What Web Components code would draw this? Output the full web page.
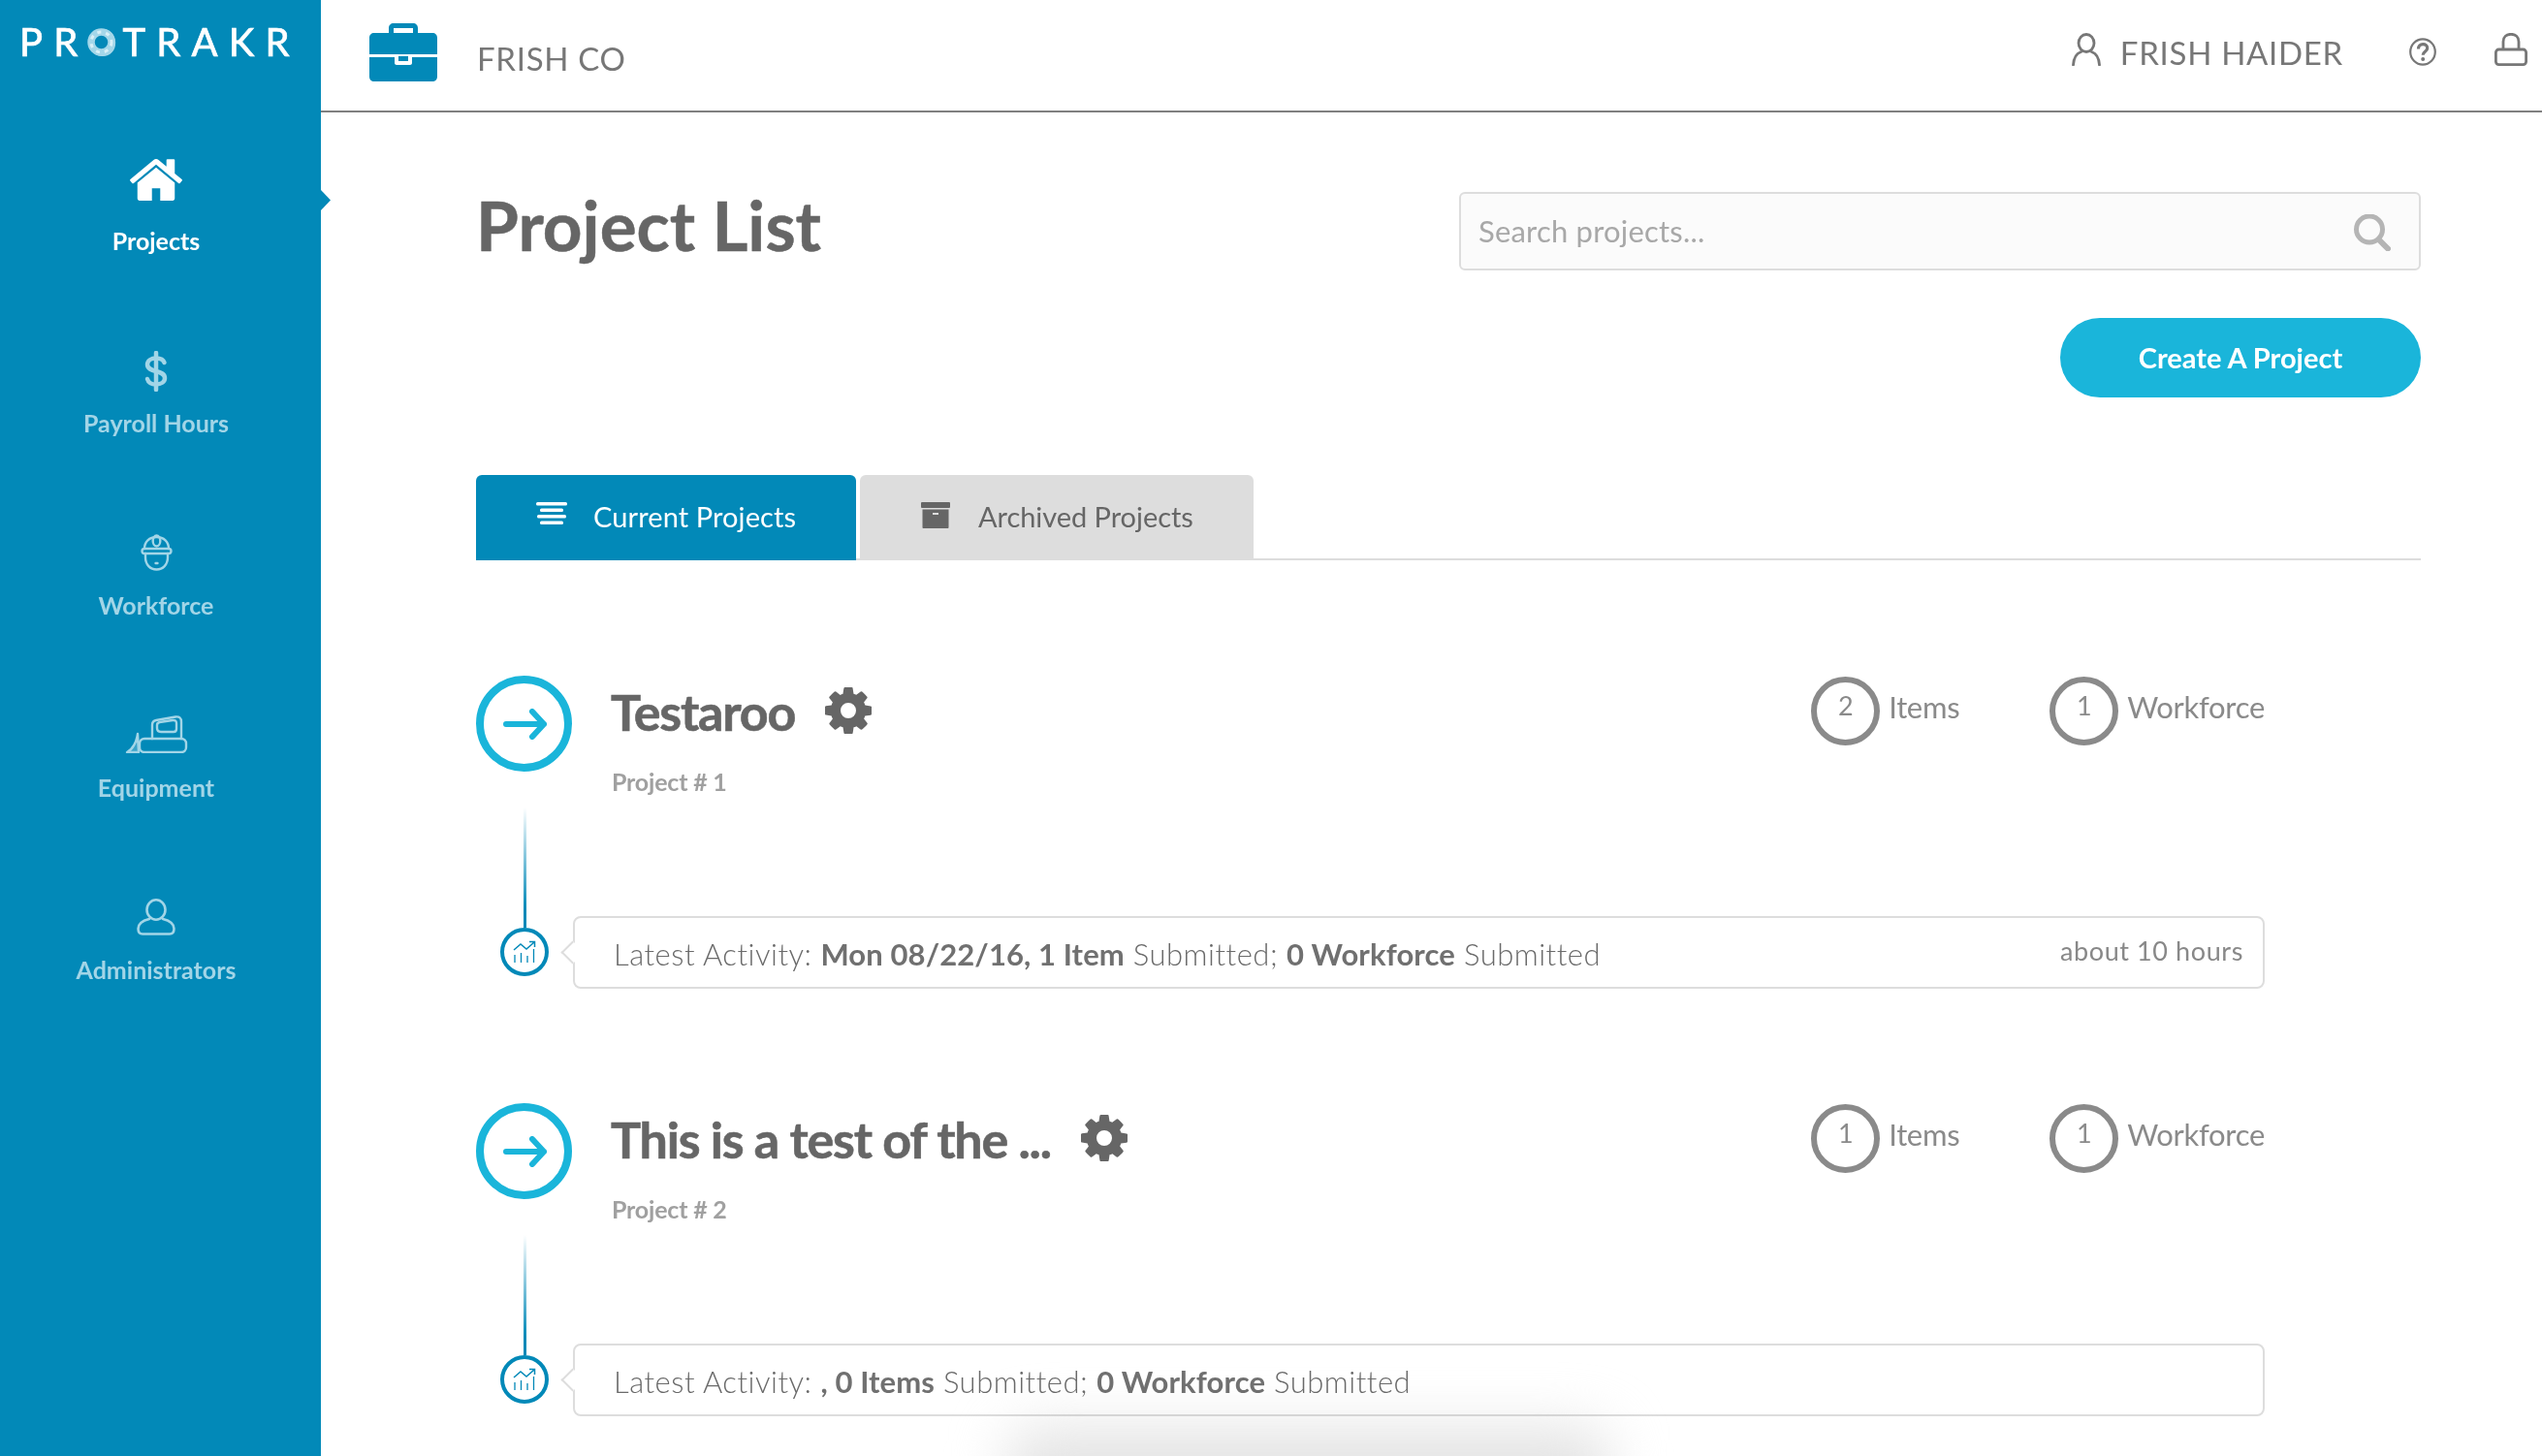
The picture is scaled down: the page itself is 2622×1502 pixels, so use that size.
<!DOCTYPE html>
<html>
<head>
<meta charset="utf-8">
<title>Project List</title>
<style>
  html, body { margin: 0; background: #fff; }
  body { font-family: Lato, "Open Sans", sans-serif; }
</style>
</head>
<body>
<app-shell>
  <side-bar slot="side">
    <nav-item icon="home" active>Projects</nav-item>
    <nav-item icon="dollar">Payroll Hours</nav-item>
    <nav-item icon="helmet">Workforce</nav-item>
    <nav-item icon="dozer">Equipment</nav-item>
    <nav-item icon="admin">Administrators</nav-item>
  </side-bar>
  <top-bar slot="top" company="FRISH CO" user="FRISH HAIDER"></top-bar>
  <page-head heading="Project List" placeholder="Search projects..." action="Create A Project"></page-head>
  <project-tabs></project-tabs>
  <project-row name="Testaroo" number="1" items="2" workforce="1" ago="about 10 hours">
    Latest Activity: <b>Mon 08/22/16, 1 Item</b> Submitted; <b>0 Workforce</b> Submitted
  </project-row>
  <project-row name="This is a test of the ..." number="2" items="1" workforce="1">
    Latest Activity: <b>, 0 Items</b> Submitted; <b>0 Workforce</b> Submitted
  </project-row>
</app-shell>

<script>
const ICONS = {
  home: { svg: `<svg width="54" height="43" viewBox="97 250 1598 1287" fill="currentColor"><path d="M1472 992v480q0 26-19 45t-45 19h-384v-384h-256v384h-384q-26 0-45-19t-19-45v-480q0-1 .5-3t.5-3l575-474 575 474q1 2 1 6zm223-69l-62 74q-8 9-21 11h-3q-13 0-21-7l-692-577-692 577q-12 8-24 7-13-2-21-11l-62-74q-8-10-7-23.500t11-21.500l719-599q32-26 76-26t76 26l244 204v-195q0-14 9-23t23-9h192q14 0 23 9t9 23v408l219 182q10 8 11 21.500t-7 23.500z"/></svg>` },
  dollar: { svg: `<svg width="24" height="42" viewBox="0 0 24 42" fill="none" stroke="currentColor" stroke-width="4.500" stroke-linecap="round"><path d="M12 2v38"/><path d="M20.500 12c-1-3-4.500-4.500-8.500-4.500-5 0-9 2.500-9 6.500 0 9 18 5 18 14 0 4-4 6.500-9 6.500-4.500 0-8-2-9-5.500"/></svg>` },
  helmet: { svg: `<svg width="33" height="38" viewBox="0 0 33 38" fill="none" stroke="currentColor" stroke-width="2.400" stroke-linecap="round" stroke-linejoin="round"><path d="M4 15C4 8 9 3 16.500 3S29 8 29 15"/><rect x="1.500" y="15" width="30" height="5" rx="2.500"/><ellipse cx="16.500" cy="7" rx="3.800" ry="5.500"/><path d="M5 20v4c0 7.500 5 12.500 11.500 12.500S28 31.500 28 24v-4"/><path d="M15.500 30h2"/></svg>` },
  dozer: { svg: `<svg width="65" height="39" viewBox="0 0 65 39" fill="none" stroke="currentColor" stroke-width="2.400" stroke-linecap="round" stroke-linejoin="round"><rect x="15" y="24" width="48" height="14" rx="5"/><path d="M28 24V10c0-3 1-4.500 4-5l20-3.500c4-.5 6 1 6 5V24"/><path d="M33 10c0-1.500 1-2.500 2.500-3L49 5c2.500-.300 4 .7 4 3v6c0 2-1 3-3 3H37c-2.500 0-4-1.500-4-4z"/><path d="M13 19c-1 8-5 16-11 19h12z" fill="currentColor" fill-opacity=".35"/></svg>` },
  admin: { svg: `<svg width="40" height="38" viewBox="0 0 40 38" fill="none" stroke="currentColor" stroke-width="2.600" stroke-linecap="round" stroke-linejoin="round"><ellipse cx="20" cy="11.500" rx="9.500" ry="10.200"/><path d="M13 21c-6 1.500-11.500 4-11.500 10 0 4 1.500 5.500 4.500 5.500h28c3 0 4.500-1.500 4.500-5.500 0-6-5.500-8.500-11.500-10"/></svg>` },
  briefcase: `<svg width="70" height="60" viewBox="0 0 70 60"><path fill="#0289b8" d="M20 10V5c0-3 2-5 5-5h20c3 0 5 2 5 5v5h15c3 0 5 2 5 5v17H0V15c0-3 2-5 5-5zm5 0h20V5H25zM0 35h26v6c0 1 1 2 2 2h14c1 0 2-1 2-2v-6h26v20c0 3-2 5-5 5H5c-3 0-5-2-5-5z"/><rect x="30" y="34" width="10" height="5" fill="#0289b8"/></svg>`,
  user: `<svg width="30" height="34" viewBox="0 0 30 34" fill="none" stroke="#777" stroke-width="2.800" stroke-linecap="round"><ellipse cx="15" cy="10.500" rx="8" ry="9"/><path d="M1.500 33c.5-7 3.500-12 8-13.500M28.500 33c-.5-7-3.500-12-8-13.500"/></svg>`,
  help: `<svg class="help" width="28" height="29" viewBox="0 0 28 29" fill="none" stroke="#777" stroke-width="2.200"><ellipse cx="14" cy="14.500" rx="12.800" ry="13.200"/><path d="M9.500 11.500c0-3 2-4.800 4.700-4.800 2.600 0 4.500 1.600 4.500 4 0 3.600-4.500 3.500-4.500 7" stroke-width="3.200"/><circle cx="14.200" cy="22" r="2" fill="#777" stroke="none"/></svg>`,
  lock: `<svg class="lock" width="34" height="34" viewBox="0 0 34 34" fill="none" stroke="#777" stroke-width="2.800"><path d="M9 17V9c0-5 3.500-7.700 8-7.700S25 4 25 9v8"/><rect x="1.400" y="17" width="31.200" height="15.600" rx="3"/></svg>`,
  search: `<svg width="38" height="38" viewBox="0 0 38 38" fill="none" stroke="#b5b5b5" stroke-width="5" stroke-linecap="round"><ellipse cx="16" cy="15.500" rx="13.500" ry="13.500"/><path d="M26 26.500l9 9" stroke-width="6"/></svg>`,
  list: `<svg width="32" height="23" viewBox="0 0 32 23" fill="#fff"><rect x="0" y="0" width="32" height="3.500" rx="1.500"/><rect x="4" y="6.500" width="24" height="3.500" rx="1.500"/><rect x="1" y="13" width="30" height="3.500" rx="1.500"/><rect x="4" y="19.500" width="24" height="3.500" rx="1.500"/></svg>`,
  archive: `<svg width="30" height="27" viewBox="0 0 30 27" fill="#666"><rect x="0" y="0" width="30" height="6" rx="1"/><path d="M1.500 7.500h27V26c0 .6-.4 1-1 1h-25c-.6 0-1-.4-1-1zM12 11v2h6v-2z" fill-rule="evenodd"/></svg>`,
  gear: `<svg width="48" height="48" viewBox="128 128 1536 1536" fill="#666"><path d="M1152 896q0-106-75-181t-181-75-181 75-75 181 75 181 181 75 181-75 75-181zm512-109v222q0 12-8 23t-20 13l-185 28q-19 54-39 91 35 50 107 138 10 12 10 25t-9 23q-27 37-99 108t-94 71q-12 0-26-9l-138-108q-44 23-91 38-16 136-29 186-7 28-36 28h-222q-14 0-24.500-8.500t-11.500-21.500l-28-184q-49-16-90-37l-141 107q-10 9-25 9-14 0-25-11-126-114-165-168-7-10-7-23 0-12 8-23 15-21 51-66.500t54-70.500q-27-50-41-99l-183-27q-13-2-21-12.500t-8-23.500v-222q0-12 8-23t19-13l186-28q14-46 39-92-40-57-107-138-10-12-10-24 0-10 9-23 26-36 98.500-107.500t94.500-71.500q13 0 26 10l138 107q44-23 91-38 16-136 29-186 7-28 36-28h222q14 0 24.500 8.500t11.500 21.500l28 184q49 16 90 37l142-107q9-9 24-9 13 0 25 10 129 119 165 170 7 8 7 22 0 12-8 23-15 21-51 66.500t-54 70.500q26 50 41 98l183 28q13 2 21 12.500t8 23.500z"/></svg>`,
  arrow: `<svg width="46" height="32" viewBox="0 0 46 32" fill="none" stroke="#1ab5da" stroke-width="6" stroke-linecap="round" stroke-linejoin="round"><path d="M3 16h39M30 3l12 13-12 13"/></svg>`,
  chart: `<svg width="24" height="24" viewBox="0 0 24 24" fill="none" stroke="#0289b8" stroke-width="1.300"><path d="M2 15v8M8.500 13v10M15 16v7M21.500 9v14"/><path d="M1 10l7-6 6 5 8-7M17 1.500h5.500V7" stroke-width="1.500"/></svg>`
};

class AppShell extends HTMLElement {
  constructor() {
    super();
    this.attachShadow({ mode: "open" });
    this.shadowRoot.innerHTML = `
      <style>
        :host { display: flex; width: 2622px; height: 1502px; overflow: hidden; position: relative; background: #fff; color: #777; }
        .main { flex: 1; display: flex; flex-direction: column; min-width: 0; }
        .content { padding: 82px 125px 0 160px; }
        .smudge { position: absolute; left: 1040px; top: 1472px; width: 620px; height: 110px; background: #e4e4e4; filter: blur(28px); border-radius: 30px; pointer-events: none; mix-blend-mode: multiply; }
      </style>
      <slot name="side"></slot>
      <div class="main">
        <slot name="top"></slot>
        <div class="content"><slot></slot></div>
      </div>
      <div class="smudge"></div>
    `;
  }
}

class SideBar extends HTMLElement {
  constructor() {
    super();
    this.attachShadow({ mode: "open" });
    this.shadowRoot.innerHTML = `
      <style>
        :host { display: block; flex: 0 0 331px; width: 331px; height: 100%; background: #0289b8; position: relative; }
        .logo { display: flex; align-items: center; height: 29px; padding: 29px 0 0 20px; color: #fff; font: 400 40px/29px Lato, sans-serif; letter-spacing: 11.200px; -webkit-text-stroke: .7px #fff; white-space: nowrap; }
        .o { position: relative; display: inline-block; width: 28px; margin: 0 8px 0 -1px; letter-spacing: 0; color: #a9d9ea; -webkit-text-stroke: 0; font-size: 38px; }
        .o svg { position: absolute; left: 0; top: 0; }
        nav { padding-top: 111px; width: 322px; }
        .notch { position: absolute; left: 331px; top: 196px; width: 10px; height: 21px; background: #0289b8; clip-path: polygon(0 0, 100% 50%, 0 100%); }
      </style>
      <div class="logo">PR<span class="o">O<svg width="29" height="29" viewBox="0 0 29 29" fill="none"><circle cx="14.500" cy="14.500" r="10.500" stroke="#a4d7e9" stroke-width="7.500"/><circle cx="14.500" cy="14.500" r="10.500" stroke="#d9f0f7" stroke-width="3" stroke-dasharray="4 5"/></svg></span>TRAKR</div>
      <nav><slot></slot></nav>
      <div class="notch"></div>
    `;
  }
}

class NavItem extends HTMLElement {
  constructor() {
    super();
    this.attachShadow({ mode: "open" });
  }
  connectedCallback() {
    this.shadowRoot.innerHTML = `
      <style>
        :host { display: flex; flex-direction: column; align-items: center; height: 188px; color: #a2d5e7; font: 700 25px/30px Lato, sans-serif; }
        :host([active]) { color: #fff; }
        .icon { height: 44px; display: flex; align-items: flex-end; }
        :host([icon="home"]) .icon { height: 44px; padding-bottom: 6px; margin-top: -6px; }
        :host([icon="dollar"]) .icon { margin-top: 3px; }
        :host([icon="dollar"]) .label { margin-top: 17px; }
        .label { margin-top: 20px; white-space: nowrap; }
      </style>
      <div class="icon">${ICONS[this.getAttribute("icon")].svg}</div>
      <div class="label"><slot></slot></div>
    `;
  }
}

class TopBar extends HTMLElement {
  constructor() {
    super();
    this.attachShadow({ mode: "open" });
  }
  connectedCallback() {
    this.shadowRoot.innerHTML = `
      <style>
        :host { display: flex; flex: 0 0 auto; align-items: center; height: 114px; border-bottom: 2px solid #808080; color: #777; font: 400 33px/40px Lato, sans-serif; }
        .co { display: flex; align-items: center; padding-left: 50px; }
        .co span { margin-left: 41px; padding-top: 5px; letter-spacing: .7px; }
        .co svg { margin-top: -6px; }
        .right { margin-left: auto; display: flex; align-items: center; padding-right: 15px; }
        .name { margin-left: 20px; margin-right: 68px; margin-top: -6px; letter-spacing: .7px; }
        .right svg { margin-top: -12px; }
        .right svg.help { margin-top: -7px; margin-right: 60px; }
      </style>
      <div class="co">${ICONS.briefcase}<span>${this.getAttribute("company")}</span></div>
      <div class="right">${ICONS.user}<span class="name">${this.getAttribute("user")}</span>${ICONS.help}${ICONS.lock}</div>
    `;
  }
}

class PageHead extends HTMLElement {
  constructor() {
    super();
    this.attachShadow({ mode: "open" });
  }
  connectedCallback() {
    this.shadowRoot.innerHTML = `
      <style>
        :host { display: flex; justify-content: space-between; align-items: flex-start; }
        h1 { margin: -1px 0 0; color: #666; font: 700 71px/70px Lato, sans-serif; letter-spacing: 0; -webkit-text-stroke: .5px #666; }
        .side { display: flex; flex-direction: column; align-items: flex-end; gap: 49px; }
        .search { width: 992px; height: 81px; box-sizing: border-box; display: flex; align-items: center; justify-content: space-between; padding: 0 29px 0 18px; border: 2px solid #ddd; border-radius: 6px; background: #fbfbfb; }
        .ph { color: #a8a8a8; font: 400 31px/40px Lato, sans-serif; letter-spacing: .2px; margin-top: -1px; }
        .search svg { margin-top: 2px; }
        .btn { width: 372px; height: 82px; border-radius: 41px; background: #1ab5da; color: #fff; display: flex; align-items: center; justify-content: center; font: 700 29px/36px Lato, sans-serif; }
      </style>
      <h1>${this.getAttribute("heading")}</h1>
      <div class="side">
        <div class="search"><span class="ph">${this.getAttribute("placeholder")}</span>${ICONS.search}</div>
        <div class="btn">${this.getAttribute("action")}</div>
      </div>
    `;
  }
}

class ProjectTabs extends HTMLElement {
  constructor() {
    super();
    this.attachShadow({ mode: "open" });
    this.shadowRoot.innerHTML = `
      <style>
        :host { display: flex; gap: 4px; margin: 80px 0 119px; height: 88px; box-sizing: border-box; box-shadow: inset 0 -2px 0 #ddd; font: 400 29px/36px Lato, sans-serif; }
        .tab { display: flex; align-items: flex-start; border-radius: 6px 6px 0 0; box-sizing: border-box; padding-top: 28px; }
        .tab span { margin-top: -3px; }
        .cur { width: 392px; height: 88px; background: #0289b8; color: #fff; padding-left: 62px; }
        .cur span { margin-left: 27px; letter-spacing: .1px; }
        .arc { width: 406px; height: 86px; background: #ddd; color: #666; padding-left: 63px; }
        .arc span { margin-left: 29px; letter-spacing: -.05px; }
      </style>
      <div class="tab cur">${ICONS.list}<span>Current Projects</span></div>
      <div class="tab arc">${ICONS.archive}<span>Archived Projects</span></div>
    `;
  }
}

class StatBadge extends HTMLElement {
  constructor() {
    super();
    this.attachShadow({ mode: "open" });
  }
  connectedCallback() {
    this.shadowRoot.innerHTML = `
      <style>
        :host { display: flex; align-items: flex-start; color: #8a8a8a; font: 400 31px/44px Lato, sans-serif; letter-spacing: -.3px; }
        .ring { width: 71px; height: 71px; box-sizing: border-box; border: 6px solid #8a8a8a; border-radius: 50%; display: flex; justify-content: center; font-size: 27px; line-height: 48px; margin-right: 9px; }
        .t { margin-top: 9px; }
      </style>
      <div class="ring">${this.getAttribute("count")}</div>
      <div class="t">${this.getAttribute("label")}</div>
    `;
  }
}

class ProjectRow extends HTMLElement {
  constructor() {
    super();
    this.attachShadow({ mode: "open" });
  }
  connectedCallback() {
    const ago = this.getAttribute("ago");
    this.shadowRoot.innerHTML = `
      <style>
        :host { display: block; width: 1845px; margin-bottom: 118px; }
        .top { display: flex; height: 136px; align-items: flex-start; }
        .go { flex: 0 0 99px; height: 99px; box-sizing: border-box; border: 8px solid #1ab5da; border-radius: 50%; display: flex; align-items: center; justify-content: center; }
        .go svg { margin-left: 2px; }
        .info { margin-left: 40px; flex: 1; }
        .name { display: flex; align-items: flex-start; color: #666; font: 700 52px/66px Lato, sans-serif; letter-spacing: -1.2px; -webkit-text-stroke: .6px #666; }
        .name span { padding-top: 4px; }
        .name svg { margin: 12px 0 0 31px; }
        .num { color: #a0a0a0; font: 700 25px/32px Lato, sans-serif; letter-spacing: -.2px; margin-top: 23px; padding-left: 1px; }
        .stats { display: flex; gap: 93px; margin-top: 1px; }
        .bottom { display: flex; align-items: flex-end; }
        .rail { flex: 0 0 100px; display: flex; flex-direction: column; align-items: center; margin-bottom: 13px; }
        .line { width: 3px; height: 124px; background: linear-gradient(#fff, #0289b8 85%); }
        .dot { width: 50px; height: 50px; box-sizing: border-box; border: 4px solid #0289b8; border-radius: 50%; display: flex; align-items: center; justify-content: center; }
        .box { flex: 1; position: relative; height: 75px; box-sizing: border-box; border: 2px solid #ddd; border-radius: 8px; background: #fff; display: flex; align-items: center; justify-content: space-between; padding: 2px 20px 0 40px; color: #6a6a6a; font: 300 31px/40px Lato, sans-serif; letter-spacing: .5px; white-space: nowrap; }
        .box::before { content: ""; position: absolute; left: -11px; top: 27px; width: 15px; height: 15px; background: #fff; border-left: 2px solid #ddd; border-bottom: 2px solid #ddd; transform: rotate(45deg); }
        ::slotted(b) { font-weight: 700; color: #707070; letter-spacing: .1px; }
        .ago { font: 400 27px/36px Lato, sans-serif; letter-spacing: .6px; color: #888; margin-top: -6px; }
      </style>
      <div class="top">
        <div class="go">${ICONS.arrow}</div>
        <div class="info">
          <div class="name"><span>${this.getAttribute("name")}</span>${ICONS.gear}</div>
          <div class="num">Project # ${this.getAttribute("number")}</div>
        </div>
        <div class="stats">
          <stat-badge count="${this.getAttribute("items")}" label="Items"></stat-badge>
          <stat-badge count="${this.getAttribute("workforce")}" label="Workforce"></stat-badge>
        </div>
      </div>
      <div class="bottom">
        <div class="rail"><div class="line"></div><div class="dot">${ICONS.chart}</div></div>
        <div class="box"><span><slot></slot></span>${ago ? `<span class="ago">${ago}</span>` : ""}</div>
      </div>
    `;
  }
}

customElements.define("app-shell", AppShell);
customElements.define("side-bar", SideBar);
customElements.define("nav-item", NavItem);
customElements.define("top-bar", TopBar);
customElements.define("page-head", PageHead);
customElements.define("project-tabs", ProjectTabs);
customElements.define("stat-badge", StatBadge);
customElements.define("project-row", ProjectRow);
</script>
</body>
</html>
